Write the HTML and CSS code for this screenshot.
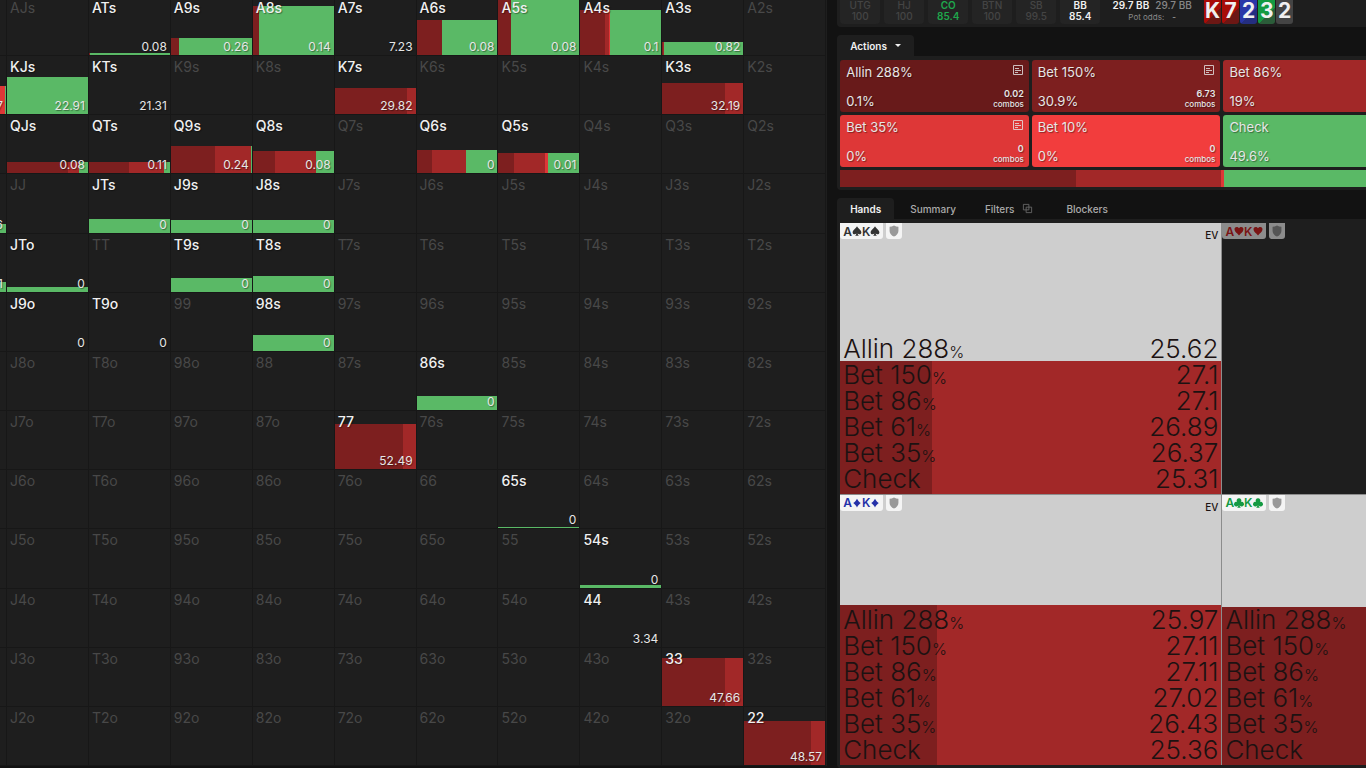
FILE: index.html
```
<!DOCTYPE html>
<html lang="en">
<head>
    <meta charset="UTF-8">
    <meta name="viewport" content="width=device-width, initial-scale=1.0">
    <title>Range Viewer</title>
    <link rel="stylesheet" href="styles.css">
</head>
<body>
    <svg class="sprite" aria-hidden="true">
        <symbol id="spade" viewBox="0 0 16 16"><path d="M8 0.5C6.5 4 1 6.5 1 10.2c0 3 3.8 4 6 1.8-.2 1.6-.8 2.6-2 3.5h6c-1.2-.9-1.8-1.9-2-3.5 2.2 2.2 6 1.2 6-1.8C15 6.500 9.500 4 8 .5z"/></symbol>
        <symbol id="heart" viewBox="0 0 16 16"><path d="M8 15C5 11.500 .8 9 .8 5.200.8 1 6 .2 8 3.600 10 .2 15.200 1 15.200 5.200 15.200 9 11 11.500 8 15z"/></symbol>
        <symbol id="diamond" viewBox="0 0 16 16"><path d="M8 1C9.500 4 11.500 6 14 8c-2.500 2-4.500 4-6 7-1.500-3-3.500-5-6-7 2.500-2 4.500-4 6-7z"/></symbol>
        <symbol id="club" viewBox="0 0 16 16"><path d="M8 .5a3.700 3.700 0 0 1 3 5.900 3.700 3.700 0 1 1-2 5.300c.1 1.700.8 2.900 2 3.800H5c1.200-.9 1.900-2.100 2-3.800a3.700 3.700 0 1 1-2-5.300 3.700 3.700 0 0 1 3-5.900z"/></symbol>
        <symbol id="shield" viewBox="0 0 12 14"><path d="M6 .3Q8.500 1.600 11.300 2v5c0 3-2.300 5.500-5.300 6.700C3 12.500 .7 10 .7 7V2Q3.500 1.600 6 .3z"/></symbol>
        <symbol id="note" viewBox="0 0 12 12"><path d="M1.500 1.500h9v9h-9zM3 4.500h4M3 6.500h6M3 8.500h3" fill="none" stroke="currentColor"/></symbol>
        <symbol id="copy" viewBox="0 0 12 12"><path d="M1.500 1.500h6v6h-6zM4.500 4.500h6v6h-6z" fill="none" stroke="currentColor"/></symbol>
    </svg>

    <main class="layout">
        <section class="matrix" id="matrix"></section>

        <section class="side">
            <header class="table-info">
                <div class="seats">
                    <div class="seat"><span>UTG</span><span>100</span></div>
                    <div class="seat"><span>HJ</span><span>100</span></div>
                    <div class="seat active"><span>CO</span><span>85.4</span></div>
                    <div class="seat"><span>BTN</span><span>100</span></div>
                    <div class="seat"><span>SB</span><span>99.5</span></div>
                    <div class="seat hero"><span>BB</span><span>85.4</span></div>
                </div>
                <div class="pot">
                    <div class="pot-size"><b>29.7 BB</b><span>29.7 BB</span></div>
                    <div class="pot-odds"><span>Pot odds:</span><b>-</b></div>
                </div>
                <div class="board">
                    <span class="card red">K</span>
                    <span class="card red">7</span>
                    <span class="card blue">2</span>
                    <span class="card green">3</span>
                    <span class="card black">2</span>
                </div>
            </header>

            <section class="block">
                <nav class="tabs">
                    <button class="tab selected">Actions <i class="caret"></i></button>
                </nav>
                <div class="panel">
                    <div class="actions">
                        <button class="action allin">
                            <span class="name">Allin 288%</span>
                            <svg class="note"><use href="#note"/></svg>
                            <span class="freq">0.1%</span>
                            <span class="combos"><b>0.02</b>combos</span>
                        </button>
                        <button class="action bet150">
                            <span class="name">Bet 150%</span>
                            <svg class="note"><use href="#note"/></svg>
                            <span class="freq">30.9%</span>
                            <span class="combos"><b>6.73</b>combos</span>
                        </button>
                        <button class="action bet86">
                            <span class="name">Bet 86%</span>
                            <span class="freq">19%</span>
                        </button>
                        <button class="action bet35 first">
                            <span class="name">Bet 35%</span>
                            <svg class="note"><use href="#note"/></svg>
                            <span class="freq">0%</span>
                            <span class="combos"><b>0</b>combos</span>
                        </button>
                        <button class="action bet10">
                            <span class="name">Bet 10%</span>
                            <span class="freq">0%</span>
                            <span class="combos"><b>0</b>combos</span>
                        </button>
                        <button class="action check">
                            <span class="name">Check</span>
                            <span class="freq">49.6%</span>
                        </button>
                    </div>
                    <div class="strategy">
                        <i class="bet150" style="width: 30.9%"></i>
                        <i class="bet86" style="width: 19%"></i>
                        <i class="bet35" style="width: 0.4%"></i>
                        <i class="check" style="width: 49.7%"></i>
                    </div>
                </div>
            </section>

            <section class="block grow">
                <nav class="tabs">
                    <button class="tab selected">Hands</button>
                    <button class="tab">Summary</button>
                    <button class="tab">Filters <svg class="copy"><use href="#copy"/></svg></button>
                    <button class="tab">Blockers</button>
                </nav>
                <div class="panel grow">
                    <div class="hands">
                        <article class="hand">
                            <div class="fill" style="height: 49%">
                                <i class="bet150" style="width: 24%"></i>
                                <i class="bet86" style="width: 76%"></i>
                            </div>
                            <div class="hand-head">
                                <span class="combo spades">A<svg><use href="#spade"/></svg>K<svg><use href="#spade"/></svg></span>
                                <span class="shield"><svg><use href="#shield"/></svg></span>
                                <span class="ev">EV</span>
                            </div>
                            <dl class="evs">
                                <div><dt>Allin 288<small>%</small></dt><dd>25.62</dd></div>
                                <div><dt>Bet 150<small>%</small></dt><dd>27.1</dd></div>
                                <div><dt>Bet 86<small>%</small></dt><dd>27.1</dd></div>
                                <div><dt>Bet 61<small>%</small></dt><dd>26.89</dd></div>
                                <div><dt>Bet 35<small>%</small></dt><dd>26.37</dd></div>
                                <div><dt>Check</dt><dd>25.31</dd></div>
                            </dl>
                        </article>
                        <article class="hand empty">
                            <div class="hand-head">
                                <span class="combo hearts">A<svg><use href="#heart"/></svg>K<svg><use href="#heart"/></svg></span>
                                <span class="shield"><svg><use href="#shield"/></svg></span>
                            </div>
                        </article>
                        <article class="hand">
                            <div class="fill" style="height: 59%">
                                <i class="bet150" style="width: 25.5%"></i>
                                <i class="bet86" style="width: 74.5%"></i>
                            </div>
                            <div class="hand-head">
                                <span class="combo diamonds">A<svg><use href="#diamond"/></svg>K<svg><use href="#diamond"/></svg></span>
                                <span class="shield"><svg><use href="#shield"/></svg></span>
                                <span class="ev">EV</span>
                            </div>
                            <dl class="evs">
                                <div><dt>Allin 288<small>%</small></dt><dd>25.97</dd></div>
                                <div><dt>Bet 150<small>%</small></dt><dd>27.11</dd></div>
                                <div><dt>Bet 86<small>%</small></dt><dd>27.11</dd></div>
                                <div><dt>Bet 61<small>%</small></dt><dd>27.02</dd></div>
                                <div><dt>Bet 35<small>%</small></dt><dd>26.43</dd></div>
                                <div><dt>Check</dt><dd>25.36</dd></div>
                            </dl>
                        </article>
                        <article class="hand">
                            <div class="fill" style="height: 58.5%">
                                <i class="bet150" style="width: 100%"></i>
                            </div>
                            <div class="hand-head">
                                <span class="combo clubs">A<svg><use href="#club"/></svg>K<svg><use href="#club"/></svg></span>
                                <span class="shield"><svg><use href="#shield"/></svg></span>
                            </div>
                            <dl class="evs">
                                <div><dt>Allin 288<small>%</small></dt></div>
                                <div><dt>Bet 150<small>%</small></dt></div>
                                <div><dt>Bet 86<small>%</small></dt></div>
                                <div><dt>Bet 61<small>%</small></dt></div>
                                <div><dt>Bet 35<small>%</small></dt></div>
                                <div><dt>Check</dt></div>
                            </dl>
                        </article>
                    </div>
                </div>
            </section>
        </section>
    </main>

    <script src="matrix.js"></script>
</body>
</html>
```
FILE: styles.css
```
* {
    box-sizing: border-box;
}
body {
    margin: 0;
    height: 100vh;
    overflow: hidden;
    background: #121212;
    color: #e6e6e6;
    font-family: Inter, "Liberation Sans", sans-serif;
    font-size: 10px;
}
button {
    border: none;
    background: none;
    color: inherit;
    font: inherit;
    text-align: left;
    cursor: pointer;
}
.sprite {
    display: none;
}
.layout {
    display: grid;
    grid-template-columns: minmax(0, 61fr) minmax(0, 39fr);
    gap: 10px;
    height: 100vh;
}

/* action colours */
.allin { background: #681a1a; }
.bet150 { background: #7d1f1f; }
.bet86 { background: #a22828; }
.bet35 { background: #de3737; }
.bet10 { background: #f23d3d; }
.check { background: #5ab966; }

/* range matrix, scrolled a little past its top left corner */
.matrix {
    display: grid;
    grid-template-columns: 7px repeat(10, 1fr);
    grid-template-rows: repeat(13, 1fr);
    height: calc(100vh + 1px);
    margin-top: -3px;
    padding-right: 1px;
    background: #1e1e1e;
}
.cell {
    display: grid;
    grid-template-columns: minmax(0, 1fr);
    overflow: hidden;
    min-width: 0;
    min-height: 0;
    border-right: 1px solid #171717;
    border-bottom: 1px solid #171717;
}
.cell > * {
    grid-area: 1 / 1;
}
.cell .bar {
    display: flex;
    align-self: end;
}
.cell .label {
    padding: 2px 3px;
    color: #484848;
    font-size: 14px;
    line-height: 17px;
}
.cell .value {
    place-self: end;
    padding: 0 3px;
    font-size: 12px;
    line-height: 16px;
    text-shadow: 1px 1px 1px rgba(0, 0, 0, 0.4);
}
.cell.in-range .label {
    color: #f0f0f0;
    font-weight: 500;
    text-shadow: 1px 1px 1px rgba(0, 0, 0, 0.4);
}

/* right side */
.side {
    display: flex;
    flex-direction: column;
    gap: 8px;
    height: 100vh;
    overflow: hidden;
}
.table-info {
    display: flex;
    height: 27px;
    padding: 0 3px;
    background: #1e1e1e;
    border-radius: 0 0 0 4px;
}
.seats {
    display: flex;
    gap: 4px;
}
.seat {
    display: flex;
    flex-direction: column;
    align-items: center;
    width: 40px;
    height: 24px;
    background: #242424;
    border-radius: 0 0 4px 4px;
    color: #444;
    font-weight: 500;
    line-height: 11px;
}
.seat.active {
    color: #1fa84c;
    font-weight: 600;
}
.seat.hero {
    color: #f0f0f0;
    font-weight: 600;
}
.pot {
    display: flex;
    flex-direction: column;
    align-items: center;
    width: 104px;
    line-height: 10px;
}
.pot-size {
    display: flex;
    gap: 6px;
    color: #888;
    font-weight: 500;
}
.pot-size b {
    color: #f0f0f0;
    font-weight: 600;
}
.pot-odds {
    display: flex;
    gap: 8px;
    color: #888;
    font-size: 8px;
    line-height: 15px;
}
.board {
    display: flex;
    gap: 1px;
    height: 24px;
}
.card {
    width: 17px;
    border-radius: 0 0 3px 3px;
    color: #f0f0f0;
    font-size: 21px;
    font-weight: 700;
    line-height: 21px;
    text-align: center;
}
.card.red { background: linear-gradient(135deg, #a80c08 60%, #6c1714 60%); }
.card.blue { background: linear-gradient(135deg, #2936a8 60%, #242e80 60%); }
.card.green { background: linear-gradient(135deg, #149a42 60%, #2b5c39 60%); }
.card.black { background: #444; }

.block {
    display: flex;
    flex-direction: column;
}
.grow {
    flex: 1;
    min-height: 0;
}
.tabs {
    display: flex;
}
.tab {
    display: flex;
    align-items: center;
    gap: 8px;
    height: 21px;
    padding: 0 13px;
    border-radius: 4px 4px 0 0;
    color: #aaa;
    font-weight: 500;
}
.tab + .tab {
    padding-left: 16px;
}
.tab.selected {
    background: #1e1e1e;
    color: #f0f0f0;
    font-weight: 600;
}
.caret {
    border: 3px solid transparent;
    border-top-color: #f0f0f0;
    border-bottom: none;
}
.copy {
    width: 11px;
    height: 11px;
    margin-right: 4px;
    color: #666;
}

/* the panels run on past the right edge of the window */
.panel {
    width: 145.5%;
    padding: 4px 3px 3px;
    background: #1e1e1e;
    border-radius: 0 0 0 4px;
}
.actions {
    display: grid;
    grid-template-columns: repeat(4, 1fr);
    gap: 3px;
}
.action {
    display: grid;
    grid-template-columns: 1fr auto;
    align-content: space-between;
    height: 52px;
    padding: 4px 5px 3px 6px;
    border-radius: 3px;
    text-shadow: 1px 1px 1px rgba(0, 0, 0, 0.4);
}
.action.first {
    grid-column: 1;
}
.name, .freq {
    grid-column: 1;
    font-size: 13px;
    line-height: 16px;
}
.freq {
    align-self: end;
}
.note {
    justify-self: end;
    width: 12px;
    height: 12px;
    opacity: 0.8;
}
.combos {
    font-size: 8px;
    font-weight: 500;
    line-height: 10px;
    text-align: right;
}
.combos b {
    display: block;
    font-size: 9px;
    font-weight: 600;
}
.strategy {
    display: flex;
    height: 17px;
    margin-top: 3px;
}

.hands {
    display: grid;
    grid-template-columns: repeat(2, 1fr);
    grid-template-rows: repeat(2, 1fr);
    gap: 1px;
    height: 100%;
    background: #8c8c8c;
}
.hand {
    display: grid;
    grid-template-rows: auto 1fr;
    position: relative;
    background: #cecece;
    color: #1c1212;
}
.hand.empty {
    background: #1e1e1e;
}
.fill {
    display: flex;
    position: absolute;
    inset: auto 0 0;
}
.hand-head {
    display: flex;
    gap: 3px;
    position: relative;
    height: 16px;
    font-weight: 500;
}
.combo, .shield {
    display: flex;
    align-items: center;
    background: #f4f4f4;
    border-radius: 0 0 3px 3px;
}
.combo {
    padding: 0 3px;
    font-size: 12px;
    font-weight: 600;
}
.combo svg {
    width: 10px;
    height: 10px;
    fill: currentColor;
}
.shield {
    padding: 0 3px;
}
.shield svg {
    width: 10px;
    height: 12px;
    fill: #999;
}
.spades { color: #333; }
.hearts { color: #7a1414; }
.diamonds { color: #2430a8; }
.clubs { color: #149a42; }
.empty .combo, .empty .shield {
    background: #8c8c8c;
}
.empty .shield svg {
    fill: #555;
}
.ev {
    margin-left: auto;
    padding: 0 3px;
    line-height: 24px;
}
.evs {
    align-self: end;
    position: relative;
    margin: 0;
    padding: 0 3px 2px;
    font-size: 26px;
    font-weight: 300;
    line-height: 26px;
}
.evs div {
    display: flex;
    justify-content: space-between;
    height: 26px;
}
.evs dd {
    margin: 0;
}
.evs small {
    font-size: 16px;
}
```
FILE: matrix.js
```
const ranks = 'AKQJT98765432';
const actions = ['bet150', 'bet86', 'bet35', 'check'];

// hand: [EV, bar height in %, share of each action in %]
const hands = {
    ATs: ['0.08', 4, [1, 0, 0, 99]],
    A9s: ['0.26', 29, [10, 0, 0, 90]],
    A8s: ['0.14', 85, [8, 0, 0, 92]],
    A7s: ['7.23', 0, []],
    A6s: ['0.08', 60, [31, 0, 0, 69]],
    A5s: ['0.08', 100, [16, 0, 0, 84]],
    A4s: ['0.1', 78, [31, 4, 1, 64]],
    A3s: ['0.82', 23, [1, 1, 0, 98]],
    KQs: ['7', 48, [0, 0, 80, 20]],
    KJs: ['22.91', 65, [0, 0, 0, 100]],
    KTs: ['21.31', 0, []],
    K7s: ['29.82', 45, [90, 10, 0, 0]],
    K3s: ['32.19', 53, [78, 22, 0, 0]],
    QJs: ['0.08', 20, [76, 13, 0, 11]],
    QTs: ['0.11', 20, [50, 43, 0, 7]],
    Q9s: ['0.24', 47, [54, 45, 0, 1]],
    Q8s: ['0.08', 38, [28, 50, 0, 22]],
    Q6s: ['0', 41, [19, 42, 0, 39]],
    Q5s: ['0.01', 36, [19, 39, 3, 39]],
    QJo: ['6', 15, [0, 0, 0, 100]],
    JTs: ['0', 24, [0, 0, 0, 100]],
    J9s: ['0', 21, [0, 0, 0, 100]],
    J8s: ['0', 21, [0, 0, 0, 100]],
    QTo: ['1', 17, [0, 0, 0, 100]],
    JTo: ['0', 9, [0, 0, 0, 100]],
    T9s: ['0', 23, [0, 0, 0, 100]],
    T8s: ['0', 27, [0, 0, 0, 100]],
    J9o: ['0', 0, []],
    T9o: ['0', 0, []],
    '98s': ['0', 27, [0, 0, 0, 100]],
    '86s': ['0', 24, [0, 0, 0, 100]],
    '77': ['52.49', 77, [84, 16, 0, 0]],
    '65s': ['0', 2, [0, 0, 0, 100]],
    '54s': ['0', 5, [0, 0, 0, 100]],
    '44': ['3.34', 0, []],
    '33': ['47.66', 83, [77, 23, 0, 0]],
    '22': ['48.57', 76, [83, 17, 0, 0]]
};

function handName(row, col) {
    if (row === col) return ranks[row] + ranks[col];
    return row < col ? ranks[row] + ranks[col] + 's' : ranks[col] + ranks[row] + 'o';
}

function renderCell(row, col) {
    const name = handName(row, col);
    const hand = hands[name];
    // the Q column is only a sliver, too narrow for a label
    const label = col > 2 ? `<span class="label">${name}</span>` : '';
    if (!hand) return `<div class="cell">${label}</div>`;

    const [ev, height, shares] = hand;
    const parts = shares.map((share, i) => share ? `<i class="${actions[i]}" style="width: ${share}%"></i>` : '').join('');
    return `<div class="cell in-range">
        <div class="bar" style="height: ${height}%">${parts}</div>
        ${label}
        <span class="value">${ev}</span>
    </div>`;
}

let html = '';
for (let row = 0; row < 13; row++) {
    for (let col = 2; col < 13; col++) {
        html += renderCell(row, col);
    }
}
document.getElementById('matrix').innerHTML = html;
```
